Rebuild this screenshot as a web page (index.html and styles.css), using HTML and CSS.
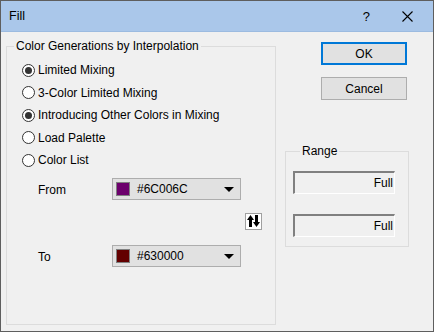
FILE: index.html
```html
<!DOCTYPE html>
<html>
<head>
<meta charset="utf-8">
<link rel="stylesheet" href="styles.css">
</head>
<body>
<div class="window">
  <div class="titlebar">
    <span class="title">Fill</span>
    <span class="help">?</span>
    <svg class="close" width="11" height="11" viewBox="0 0 11 11"><path d="M0.5 0.5 L10.5 10.5 M10.5 0.5 L0.5 10.5" stroke="#000" stroke-width="1.1" fill="none"/></svg>
  </div>
  <div class="content">
    <fieldset class="group main">
      <legend>Color Generations by Interpolation</legend>
      <div class="radios">
        <div class="radio checked"><span class="circle"></span>Limited Mixing</div>
        <div class="radio"><span class="circle"></span>3-Color Limited Mixing</div>
        <div class="radio checked"><span class="circle"></span>Introducing Other Colors in Mixing</div>
        <div class="radio"><span class="circle"></span>Load Palette</div>
        <div class="radio"><span class="circle"></span>Color List</div>
      </div>
      <div class="colorrow from">
        <span class="lbl">From</span>
        <div class="combo"><span class="swatch purple"></span><span class="val">#6C006C</span><span class="arrow"></span></div>
      </div>
      <div class="swaprow">
        <div class="swap">
          <svg width="13" height="12" viewBox="0 0 13 12">
            <path d="M3.5 0 L0 5 L7 5 Z" fill="#000"/>
            <rect x="2" y="4" width="3" height="8" fill="#000"/>
            <path d="M9.5 12 L6 7 L13 7 Z" fill="#000"/>
            <rect x="8" y="0" width="3" height="8" fill="#000"/>
          </svg>
        </div>
      </div>
      <div class="colorrow to">
        <span class="lbl">To</span>
        <div class="combo"><span class="swatch maroon"></span><span class="val">#630000</span><span class="arrow"></span></div>
      </div>
    </fieldset>
    <div class="side">
      <button class="btn ok">OK</button>
      <button class="btn">Cancel</button>
      <fieldset class="group range">
        <legend>Range</legend>
        <div class="field">Full</div>
        <div class="field">Full</div>
      </fieldset>
    </div>
  </div>
</div>
</body>
</html>
```

FILE: styles.css
```css
* { box-sizing: border-box; }
html, body { margin: 0; padding: 0; }
body {
  width: 434px;
  height: 332px;
  font-family: "Liberation Sans", Arial, sans-serif;
  font-size: 12px;
  color: #000;
  background: #f0f0f0;
  overflow: hidden;
}
.window {
  width: 434px;
  height: 332px;
  border: 1px solid #5e5e5e;
  background: #f0f0f0;
  display: flex;
  flex-direction: column;
}
.titlebar {
  height: 31px;
  flex: none;
  background: #aac7ea;
  border-bottom: 1px solid #9cbbe0;
  display: flex;
  align-items: center;
  padding-left: 8px;
}
.title { flex: 1; font-size: 12.5px; }
.help { font-size: 13px; margin-right: 32px; }
.close { margin-right: 20px; }
.content {
  flex: 1;
  display: flex;
  padding: 6px 0 0 5px;
}
.group {
  margin: 0;
  padding: 0;
  border: 1px solid #dcdcdc;
  min-width: 0;
}
.group legend {
  margin-left: 7px;
  padding: 0 2px;
  line-height: 16px;
  font-size: 12px;
}
.main {
  width: 270px;
  height: 287px;
}
.radios {
  padding: 5px 0 0 15px;
}
.radio {
  height: 22.5px;
  display: flex;
  align-items: center;
}
.circle {
  width: 13px;
  height: 13px;
  border: 1px solid #333;
  border-radius: 50%;
  background: #fff;
  margin-right: 3px;
  position: relative;
  flex: none;
}
.radio.checked .circle::after {
  content: "";
  position: absolute;
  left: 2px;
  top: 2px;
  width: 7px;
  height: 7px;
  border-radius: 50%;
  background: #333;
}
.colorrow {
  display: flex;
  align-items: center;
  padding-left: 31px;
}
.colorrow.from { margin-top: 6px; }
.colorrow.to { margin-top: 15px; }
.lbl { width: 74px; padding-top: 3px; }
.combo {
  width: 129px;
  height: 22px;
  border: 1px solid #adadad;
  background: #e1e1e1;
  display: flex;
  align-items: center;
  padding-left: 3px;
}
.swatch {
  width: 14px;
  height: 14px;
  border: 1px solid #808080;
  margin-right: 7px;
  flex: none;
}
.swatch.purple { background: #6c006c; }
.swatch.maroon { background: #630000; }
.val { flex: 1; }
.arrow {
  width: 0;
  height: 0;
  border-left: 5px solid transparent;
  border-right: 5px solid transparent;
  border-top: 5px solid #000;
  margin-right: 6px;
  margin-top: 2px;
}
.swaprow {
  display: flex;
  justify-content: flex-end;
  padding-right: 13px;
  margin-top: 13px;
}
.swap {
  width: 17px;
  height: 17px;
  border: 1px solid #a0a0a0;
  background: #fff;
  display: flex;
  align-items: center;
  justify-content: center;
}
.side {
  display: flex;
  flex-direction: column;
  padding-left: 9px;
}
.btn {
  margin: 4px 0 0 36px;
  width: 86px;
  height: 23px;
  font-family: inherit;
  font-size: 12px;
  color: #000;
  background: #e1e1e1;
  border: 1px solid #adadad;
  padding: 0;
}
.btn.ok {
  border: 2px solid #0078d7;
}
.btn + .btn { margin-top: 12px; }
.range {
  margin-top: 43px;
  width: 124px;
  height: 104px;
  padding: 12px 13px 0 7px;
}
.field {
  height: 23px;
  border-top: 2px solid #808080;
  border-left: 2px solid #808080;
  border-bottom: 1px solid #ffffff;
  border-right: 1px solid #ffffff;
  text-align: right;
  line-height: 20px;
  padding-right: 1px;
  background: #f0f0f0;
}
.field + .field { margin-top: 20px; }
```
